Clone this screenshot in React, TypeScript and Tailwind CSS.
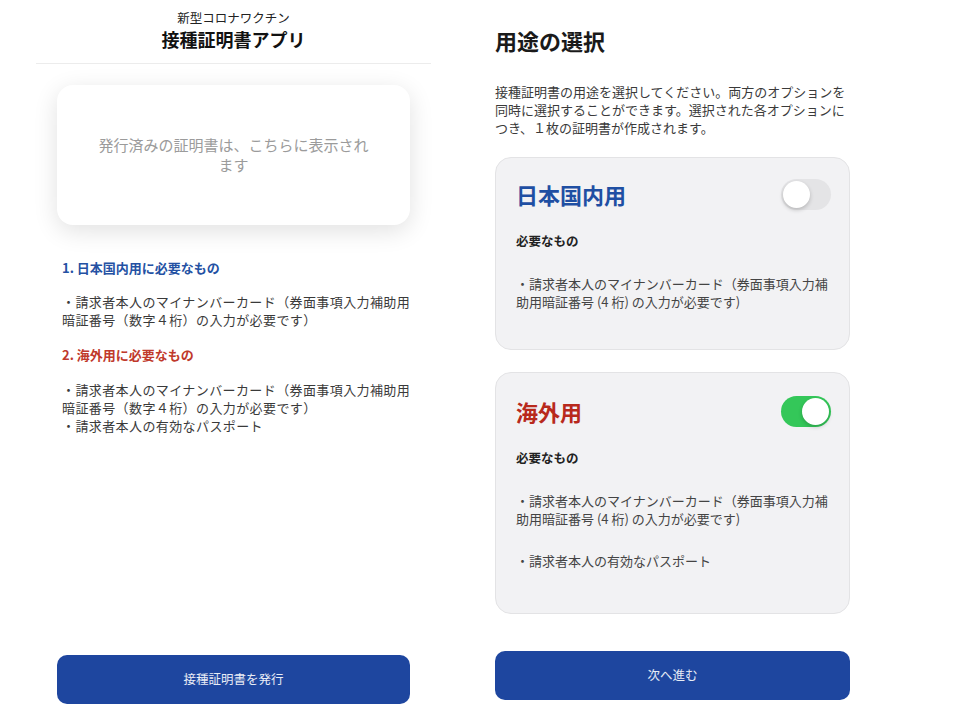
import React from "react";

const FONT = "font-['Noto_Sans_CJK_JP','Noto_Sans',sans-serif]";

function Toggle({ on }: { on: boolean }) {
  return (
    <div
      className={`relative w-[50px] h-[31px] rounded-full ${on ? "bg-[#34c759]" : "bg-[#e4e4e6]"}`}
    >
      <div
        className={`absolute top-[2px] w-[27px] h-[27px] rounded-full bg-white shadow-[0_2px_4px_rgba(0,0,0,0.2)] ${
          on ? "left-[21px]" : "left-[2px]"
        }`}
      />
    </div>
  );
}

function OptionCard({
  title,
  titleColor,
  on,
  items,
  padTop,
  padBottom,
}: {
  title: string;
  titleColor: string;
  on: boolean;
  items: string[][];
  padTop: string;
  padBottom: string;
}) {
  return (
    <div className={`rounded-[16px] border border-[#e3e3e5] bg-[#f2f2f4] pl-[20px] pr-[18px] ${padTop} ${padBottom}`}>
      <div className="flex h-[32px] items-center justify-between">
        <div className={`text-[22px] font-bold leading-[32px] ${titleColor}`}>{title}</div>
        <Toggle on={on} />
      </div>
      <div className="mt-[22px] text-[12.5px] font-bold leading-[18px] text-[#222]">必要なもの</div>
      <div className="mt-[25px] flex flex-col gap-[24px]">
        {items.map((lines, i) => (
          <div key={i} className="text-[13px] leading-[18px] text-[#444]">
            {lines.map((l, j) => (
              <div key={j}>{l}</div>
            ))}
          </div>
        ))}
      </div>
    </div>
  );
}

export default function App() {
  return (
    <div className={`flex h-[720px] w-[960px] bg-white ${FONT}`}>
      {/* left screen */}
      <div className="ml-[36px] flex w-[395px] flex-col">
        <div className="flex h-[64px] flex-col items-center border-b border-[#ececec]">
          <div className="mt-[9px] text-[12.5px] leading-[18px] text-[#222]">新型コロナワクチン</div>
          <div className="-mt-px text-[18px] font-bold leading-[26px] text-[#111]">接種証明書アプリ</div>
        </div>

        <div className="mx-[21px] mt-[21px] flex h-[140px] items-center justify-center rounded-[16px] bg-white px-[40px] text-center shadow-[0_6px_24px_rgba(0,0,0,0.12)]">
          <div className="text-[15px] leading-[20px] text-[#9b9b9b]">発行済みの証明書は、こちらに表示されます</div>
        </div>

        <div className="ml-[26px] mr-[20px] mt-[34px] whitespace-nowrap text-[13px] leading-[18px]">
          <div className="font-bold text-[#2451a3]">1. 日本国内用に必要なもの</div>
          <div className="mt-[16px] tracking-[0.4px] text-[#3a3a3a]">
            <div>・請求者本人のマイナンバーカード（券面事項入力補助用</div>
            <div>暗証番号（数字４桁）の入力が必要です）</div>
          </div>
          <div className="mt-[17px] font-bold text-[#c0392b]">2. 海外用に必要なもの</div>
          <div className="mt-[17px] tracking-[0.4px] text-[#3a3a3a]">
            <div>・請求者本人のマイナンバーカード（券面事項入力補助用</div>
            <div>暗証番号（数字４桁）の入力が必要です）</div>
            <div>・請求者本人の有効なパスポート</div>
          </div>
        </div>

        <button className="mx-[21px] mt-auto mb-[16px] h-[49px] rounded-[10px] bg-[#1e469f] text-[12.5px] text-white/90">
          接種証明書を発行
        </button>
      </div>

      {/* right screen */}
      <div className="ml-[64px] flex w-[355px] flex-col">
        <div className="mt-[25px] text-[22px] font-bold leading-[30px] text-[#1a1a1a]">用途の選択</div>
        <div className="mt-[28px] text-[13px] leading-[18px] text-[#3a3a3a]">
          接種証明書の用途を選択してください。両方のオプションを同時に選択することができます。選択された各オプションにつき、１枚の証明書が作成されます。
        </div>

        <div className="mt-[20px]">
          <OptionCard
            title="日本国内用"
            titleColor="text-[#1f4fa3]"
            on={false}
            padTop="pt-[20px]"
            padBottom="pb-[38px]"
            items={[["・請求者本人のマイナンバーカード（券面事項入力補", "助用暗証番号 (4 桁) の入力が必要です)"]]}
          />
        </div>
        <div className="mt-[22px]">
          <OptionCard
            title="海外用"
            titleColor="text-[#b8291c]"
            on={true}
            padTop="pt-[22px]"
            padBottom="pb-[43px]"
            items={[
              ["・請求者本人のマイナンバーカード（券面事項入力補", "助用暗証番号 (4 桁) の入力が必要です)"],
              ["・請求者本人の有効なパスポート"],
            ]}
          />
        </div>

        <button className="mt-auto mb-[20px] h-[49px] rounded-[10px] bg-[#1e469f] text-[12.5px] text-white/90">
          次へ進む
        </button>
      </div>
    </div>
  );
}
